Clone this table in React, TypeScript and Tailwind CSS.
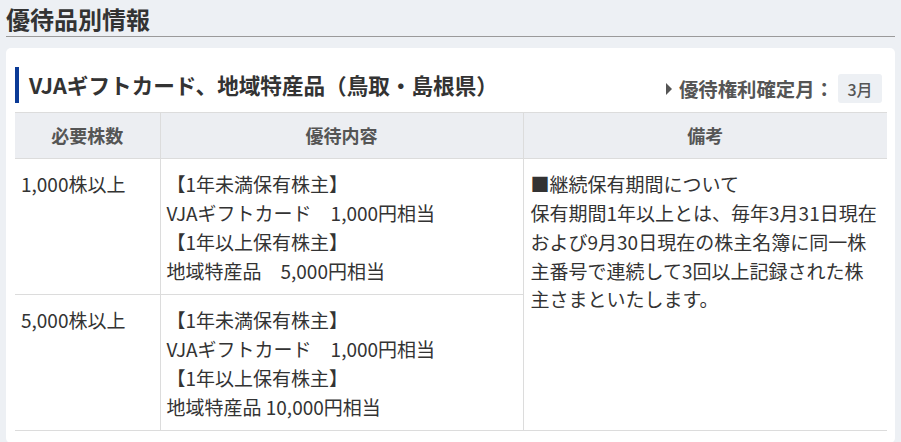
const font = { fontFamily: '"Noto Sans CJK JP", "Noto Sans", sans-serif' };

const rows = [
  {
    shares: "1,000株以上",
    lines: ["【1年未満保有株主】", "VJAギフトカード　1,000円相当", "【1年以上保有株主】", "地域特産品　5,000円相当"],
  },
  {
    shares: "5,000株以上",
    lines: ["【1年未満保有株主】", "VJAギフトカード　1,000円相当", "【1年以上保有株主】", "地域特産品 10,000円相当"],
  },
];

function SectionTitle({ children }: { children: React.ReactNode }) {
  return (
    <div className="mx-[6px] border-b border-[#9a9a9a] pt-[1px] pb-[2px]">
      <h2 className="text-[24px] font-bold leading-[30px] text-[#333]">{children}</h2>
    </div>
  );
}

function BenefitTable() {
  return (
    <table className="w-[872px] table-fixed border-collapse text-[19px] leading-[28.8px] text-[#333]">
      <colgroup>
        <col className="w-[145px]" />
        <col className="w-[363px]" />
        <col className="w-[364px]" />
      </colgroup>
      <thead>
        <tr className="h-[46px] bg-[#eceef2] text-[18px] text-[#555]">
          <th className="border border-[#dcdcdc] border-l-0 font-bold">必要株数</th>
          <th className="border border-[#dcdcdc] font-bold">優待内容</th>
          <th className="border border-[#dcdcdc] border-r-0 font-bold">備考</th>
        </tr>
      </thead>
      <tbody>
        {rows.map((row, i) => (
          <tr key={row.shares}>
            <td className="border-b border-r border-[#dcdcdc] px-[6px] pt-[11px] pb-[9px] align-top">
              {row.shares}
            </td>
            <td className="border-b border-r border-[#dcdcdc] px-[6px] pt-[11px] pb-[9px] align-top">
              {row.lines.map((l) => (
                <div key={l}>{l}</div>
              ))}
            </td>
            {i === 0 && (
              <td rowSpan={2} className="border-b border-[#dcdcdc] pl-[7px] pr-[6px] pt-[11px] align-top">
                ■継続保有期間について
                <br />
                保有期間1年以上とは、毎年3月31日現在および9月30日現在の株主名簿に同一株主番号で連続して3回以上記録された株主さまといたします。
              </td>
            )}
          </tr>
        ))}
      </tbody>
    </table>
  );
}

export default function App() {
  return (
    <div className="min-h-[442px] w-[901px] overflow-hidden bg-[#edf0f4] pt-[3px]" style={font}>
      <SectionTitle>優待品別情報</SectionTitle>
      <div className="mx-[6px] mt-[11px] rounded-[5px] bg-white px-[9px] pt-[19px] pb-[12px]">
        <div className="flex items-center justify-between pr-[4px]">
          <div className="flex h-[36px] items-center border-l-[4px] border-[#0a3a96] pl-[10px]">
            <h3 className="text-[21.6px] font-bold leading-[30px] text-[#333]">
              VJAギフトカード、地域特産品（鳥取・島根県）
            </h3>
          </div>
          <div className="mt-[7px] flex items-center text-[#555]">
            <svg width="8" height="12" viewBox="0 0 8 12" className="mr-[6px]">
              <path d="M1 0 L7 6 L1 12 Z" fill="#555" />
            </svg>
            <span className="text-[19.4px] font-bold">優待権利確定月：</span>
            <span className="ml-[4px] flex h-[29px] w-[44px] items-center justify-center rounded-[3px] bg-[#edf0f4] text-[16px] font-medium">
              3月
            </span>
          </div>
        </div>
        <div className="mt-[9px]">
          <BenefitTable />
        </div>
      </div>
    </div>
  );
}
